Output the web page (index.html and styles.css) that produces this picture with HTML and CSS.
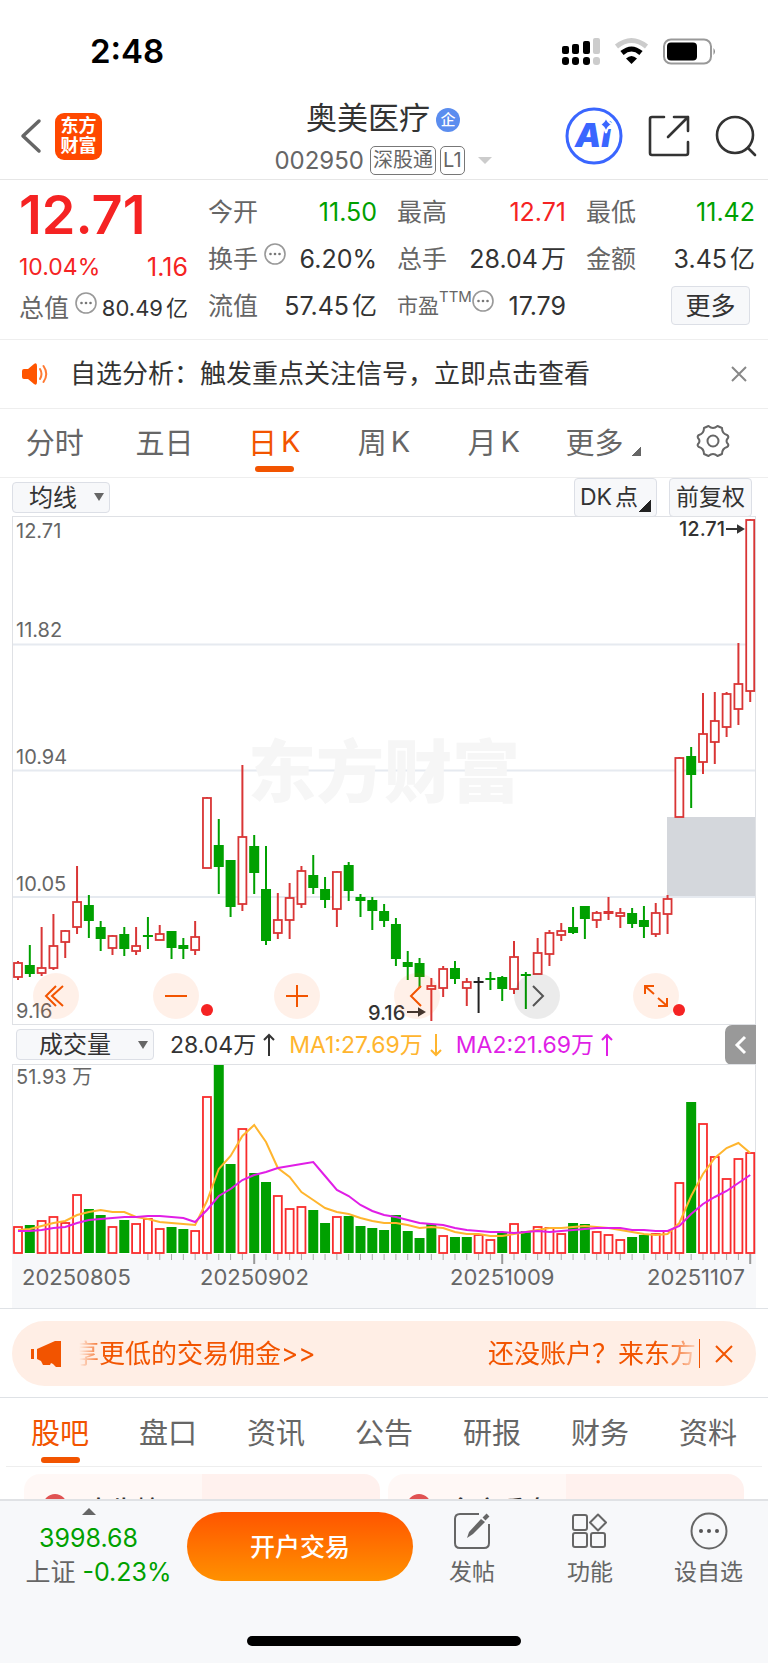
FILE: index.html
```html
<!DOCTYPE html>
<html lang="zh-CN">
<head>
<meta charset="utf-8">
<meta name="viewport" content="width=device-width, initial-scale=1">
<title>奥美医疗 002950</title>
<link rel="stylesheet" href="styles.css">
</head>
<body>
<div class="app">
  <div class="status">
    <span class="status-time">2:48</span>
    <svg class="status-icons" width="156" height="30" viewBox="0 0 156 30" aria-hidden="true">
      <g fill="#000">
        <rect x="0" y="10" width="7" height="8" rx="2"/><rect x="10" y="8" width="7" height="10" rx="2"/><rect x="21" y="5" width="7" height="13" rx="2"/>
        <rect x="0" y="21" width="7" height="8" rx="3"/><rect x="10" y="21" width="7" height="8" rx="3"/><rect x="21" y="21" width="7" height="8" rx="3"/>
      </g>
      <g fill="#ccc"><rect x="31" y="2" width="7" height="16" rx="2"/><rect x="31" y="21" width="7" height="8" rx="3"/></g>
      <path d="M54.500 10.500Q69.500-1.500 84.500 10.500" fill="none" stroke="#ccc" stroke-width="5"/>
      <path d="M60 17Q69.500 9 79 17" fill="none" stroke="#000" stroke-width="5"/>
      <path d="M64 22.500Q69.500 17.500 75 22.500L69.500 28Z"/>
      <rect x="102" y="3.500" width="47" height="24" rx="7" fill="none" stroke="#999" stroke-width="2"/>
      <rect x="105" y="6.500" width="30" height="18" rx="4"/>
      <path d="M151.500 12q3 3.500 0 7z" fill="#888"/>
    </svg>
  </div>

  <header class="header">
    <div class="header-left">
      <button class="icon-btn" aria-label="返回"><svg width="22" height="36" viewBox="0 0 22 36"><path d="M19 3L3 18L19 33" fill="none" stroke="#666" stroke-width="3.500" stroke-linecap="round" stroke-linejoin="round"/></svg></button>
      <a class="logo" href="#">东方<br>财富</a>
    </div>
    <div class="header-title">
      <h1 class="stock-name">奥美医疗<span class="badge">企</span></h1>
      <div class="stock-code"><span>002950</span><span class="tags"><span class="tag">深股通</span><span class="tag">L1</span></span><i class="tri-down"></i></div>
    </div>
    <div class="header-right">
      <button class="icon-btn" aria-label="Ai">
        <svg width="58" height="58" viewBox="0 0 58 58"><circle cx="29" cy="29" r="27" fill="none" stroke="#3a66ff" stroke-width="3"/><text x="10" y="40" class="ai-text">Ai</text><path d="M41 9Q42.500 16 48 17.500Q42.500 19 41 26Q39.500 19 34 17.500Q39.500 16 41 9Z" fill="#3a66ff" stroke="#fff" stroke-width="2"/></svg>
      </button>
      <button class="icon-btn" aria-label="分享">
        <svg width="42" height="42" viewBox="0 0 42 42" fill="none" stroke="#333" stroke-width="2.600" stroke-linecap="round" stroke-linejoin="round"><path d="M16 2H4Q2 2 2 4V38Q2 40 4 40H38Q40 40 40 38V27M26 2H40V16M40 2L20 22"/></svg>
      </button>
      <button class="icon-btn" aria-label="搜索">
        <svg width="42" height="42" viewBox="0 0 42 42" fill="none" stroke="#333" stroke-width="2.600" stroke-linecap="round"><circle cx="20" cy="20" r="18"/><path d="M33 33L40 40"/></svg>
      </button>
    </div>
  </header>

  <section class="quote">
    <div class="quote-col main">
      <strong class="price">12.71</strong>
      <div class="pair small up"><span>10.04%</span><span class="change">1.16</span></div>
      <div class="pair small"><span class="lbl">总值<svg class="dots"><use href="#more-dots"/></svg></span><span class="cap">80.49<span class="unit">亿</span></span></div>
    </div>
    <div class="quote-col">
      <div class="pair"><span class="lbl">今开</span><span class="down">11.50</span></div>
      <div class="pair"><span class="lbl">换手<svg class="dots"><use href="#more-dots"/></svg></span><span>6.20%</span></div>
      <div class="pair"><span class="lbl">流值</span><span>57.45<span class="unit">亿</span></span></div>
    </div>
    <div class="quote-col">
      <div class="pair"><span class="lbl">最高</span><span class="up">12.71</span></div>
      <div class="pair"><span class="lbl">总手</span><span>28.04<span class="unit">万</span></span></div>
      <div class="pair"><span class="lbl pe">市盈<sup>TTM</sup><svg class="dots"><use href="#more-dots"/></svg></span><span>17.79</span></div>
    </div>
    <div class="quote-col">
      <div class="pair"><span class="lbl">最低</span><span class="down">11.42</span></div>
      <div class="pair"><span class="lbl">金额</span><span>3.45<span class="unit">亿</span></span></div>
      <div class="pair end"><button class="chip more">更多</button></div>
    </div>
  </section>

  <section class="notice">
    <svg width="28" height="24" viewBox="0 0 28 24" aria-hidden="true"><path d="M0 9Q0 7 2 7H6L12 2Q15 0 15 4V20Q15 24 12 22L6 17H2Q0 17 0 15Z" fill="#ff5500"/><path d="M18 7Q21 12 18 17M21.500 4Q27 12 21.500 20" fill="none" stroke="#ff7a33" stroke-width="2" stroke-linecap="round"/></svg>
    <p>自选分析：触发重点关注信号，立即点击查看</p>
    <button class="icon-btn" aria-label="关闭"><svg width="18" height="18" viewBox="0 0 18 18"><path d="M2 2L16 16M16 2L2 16" stroke="#888" stroke-width="2"/></svg></button>
  </section>

  <nav class="tabs periods">
    <button>分时</button><button>五日</button><button class="active">日<span>K</span></button><button>周<span>K</span></button><button>月<span>K</span></button>
    <button>更多<i class="corner"></i></button>
    <button aria-label="设置"><svg width="34" height="34" viewBox="0 0 34 34" fill="none" stroke="#666" stroke-width="2" stroke-linejoin="round"><path d="M12.500 2Q17 6 21.500 2L26 4Q26 9.500 31 11Q33 12 32 14Q29 17 32 20Q33 22 31 23Q26 24.500 26 30L21.500 32Q17 28 12.500 32L8 30Q8 24.500 3 23Q1 22 2 20Q5 17 2 14Q1 12 3 11Q8 9.500 8 4Z"/><circle cx="17" cy="17" r="5.500"/></svg></button>
  </nav>

  <section class="toolbar">
    <label class="picker"><select aria-label="主图指标"><option>均线</option></select><i></i></label>
    <div class="toolbar-right">
      <button class="chip dk">DK<span class="unit">点</span><i class="corner dark"></i></button>
      <button class="chip adj">前复权</button>
    </div>
  </section>

  <section class="chart">
    <svg id="candles" viewBox="0 0 744 509" role="img" aria-label="日K线"></svg>
    <button class="ctl c1" aria-label="最早"><svg viewBox="0 0 46 46"><path d="M23 13L13 23L23 33M30 13L19 23L30 33"/></svg></button>
    <button class="ctl c2" aria-label="缩小"><svg viewBox="0 0 46 46"><path d="M12 23H34"/></svg></button>
    <button class="ctl c3" aria-label="放大"><svg viewBox="0 0 46 46"><path d="M12 23H34M23 12V34"/></svg></button>
    <button class="ctl c4" aria-label="左移"><svg viewBox="0 0 46 46"><path d="M27 13L17 23L27 33"/></svg></button>
    <button class="ctl c5" aria-label="右移"><svg viewBox="0 0 46 46"><path d="M19 13L29 23L19 33"/></svg></button>
    <button class="ctl c6" aria-label="全屏"><svg viewBox="0 0 46 46"><path d="M12 21V13H21M13 14L21 21M34 25V33H25M33 32L25 25"/></svg></button>
  </section>

  <section class="volbar">
    <label class="picker vol"><select aria-label="副图指标"><option>成交量</option></select><i></i></label>
    <div class="legend"><span>28.04万<svg viewBox="0 0 12 24"><path d="M6 23V2M1 7L6 2L11 7"/></svg></span><span class="ma1">MA1:27.69万<svg viewBox="0 0 12 24"><path d="M6 1V22M1 17L6 22L11 17"/></svg></span><span class="ma2">MA2:21.69万<svg viewBox="0 0 12 24"><path d="M6 23V2M1 7L6 2L11 7"/></svg></span></div>
    <button class="fold" aria-label="展开"><svg width="14" height="20" viewBox="0 0 14 20"><path d="M11 2L3 10L11 18" fill="none" stroke="#fff" stroke-width="3"/></svg></button>
  </section>

  <section class="chart"><svg id="volume" viewBox="0 0 744 244" role="img" aria-label="成交量"></svg></section>

  <section class="promo-wrap">
    <div class="promo">
      <svg width="32" height="28" viewBox="0 0 32 28" fill="#f25400" aria-hidden="true"><rect x="0" y="9" width="3" height="10"/><path d="M6 9L24 1H30V27H25L22 24L20 23L19 25H12L10 21L6 19Z"/></svg>
      <div class="marquee"><a href="#">享更低的交易佣金&gt;&gt;</a><a href="#">还没账户？来东方</a></div>
      <button class="icon-btn promo-x" aria-label="关闭广告"><svg width="18" height="18" viewBox="0 0 18 18"><path d="M1 1L17 17M17 1L1 17" stroke="#f25400" stroke-width="2"/></svg></button>
    </div>
  </section>

  <nav class="tabs sections">
    <button class="active">股吧</button><button>盘口</button><button>资讯</button><button>公告</button><button>研报</button><button>财务</button><button>资料</button>
  </nav>

  <section class="cards">
    <article class="card"><i class="dot"></i><h2>大牛榜</h2></article>
    <article class="card"><i class="dot"></i><h2>名家看盘</h2></article>
  </section>

  <footer class="bottom">
    <div class="bottom-row">
      <div class="index">
        <i class="tri-up"></i>
        <span class="index-val down">3998.68</span>
        <span class="index-chg">上证 <b>-0.23%</b></span>
      </div>
      <button class="trade">开户交易</button>
      <button class="action"><svg width="38" height="38" viewBox="0 0 38 38" fill="none" stroke="#666" stroke-width="2"><path d="M26 2H7Q2 2 2 7V31Q2 36 7 36H31Q36 36 36 31V12"/><path d="M14 26L16 20L28 7L32 10L20 22Z" fill="#666" stroke="none"/><path d="M31 7L35 3" stroke-width="4"/></svg>发帖</button>
      <button class="action"><svg width="38" height="38" viewBox="0 0 38 38" fill="none" stroke="#666" stroke-width="2"><rect x="2" y="3" width="14" height="15" rx="2"/><rect x="2" y="21" width="14" height="14" rx="2"/><rect x="20" y="21" width="14" height="14" rx="2"/><path d="M27 2.500L35 10.500L27 18.500L19 10.500Z" stroke-linejoin="round"/></svg>功能</button>
      <button class="action"><svg width="38" height="38" viewBox="0 0 38 38"><circle cx="19" cy="19" r="17.500" fill="none" stroke="#666" stroke-width="2"/><g fill="#555"><circle cx="11" cy="19" r="2"/><circle cx="19" cy="19" r="2"/><circle cx="27" cy="19" r="2"/></g></svg>设自选</button>
    </div>
    <div class="home"></div>
  </footer>
</div>
<svg class="defs" aria-hidden="true"><symbol id="more-dots" viewBox="0 0 22 22"><circle cx="11" cy="11" r="10" fill="none" stroke="#999" stroke-width="1.600"/><g fill="#777"><circle cx="6.500" cy="11" r="1.300"/><circle cx="11" cy="11" r="1.300"/><circle cx="15.500" cy="11" r="1.300"/></g></symbol></svg>
<script src="chart.js"></script>
</body>
</html>
```
FILE: styles.css
```css
* { box-sizing: border-box; margin: 0; padding: 0; }
body { font-family: Inter, "Noto Sans CJK SC", sans-serif; color: #333; background: #fff; }
button, select { font: inherit; color: inherit; background: none; border: 0; }
a { color: inherit; text-decoration: none; }
svg { display: block; flex: none; }
.defs { position: absolute; width: 0; height: 0; }
.app { min-height: 100vh; display: flex; flex-direction: column; }
.up { color: #f52323; }
.down { color: #00a000; }
.unit { margin-left: 3px; }

.status { height: 100px; padding: 2px 50px 0 90px; display: flex; justify-content: space-between; align-items: center; }
.status-time { font-size: 33px; font-weight: 600; color: #000; }

.header { display: grid; grid-template-columns: 1fr auto 1fr; height: 80px; border-bottom: 1px solid #e6e6e6; }
.header-left, .header-right { display: flex; align-items: center; padding-bottom: 8px; }
.header-left { padding-left: 20px; gap: 13px; }
.header-right { justify-content: flex-end; gap: 25px; padding-right: 11px; }
.icon-btn { display: flex; align-items: center; }
.logo { width: 47px; height: 47px; border-radius: 9px; background: #ff4800; color: #fff; font-size: 18px; line-height: 20px; font-weight: 700; text-align: center; padding-top: 3px; }
.header-title { padding-right: 2px; }
.stock-name { display: flex; align-items: center; justify-content: center; gap: 6px; height: 40px; font-size: 31px; line-height: 36px; font-weight: 400; padding-bottom: 4px; }
.badge { width: 24px; height: 24px; border-radius: 50%; background: #5b8def; color: #fff; font-size: 15px; line-height: 23px; font-weight: 500; text-align: center; margin-top: 4px; }
.stock-code { display: flex; align-items: center; gap: 6px; height: 40px; font-size: 24px; color: #666; }
.tags { display: flex; gap: 4px; }
.tag { border: 1px solid #777; border-radius: 5px; height: 29px; padding: 0 2px; font-size: 20px; line-height: 27px; }
.tri-down { margin-left: 7px; border: 7px solid transparent; border-top: 7px solid #ccc; border-bottom: 0; }
.ai-text { font-size: 33px; font-weight: 900; font-style: italic; fill: #3a66ff; }

.quote { display: grid; grid-template-columns: repeat(4, 1fr); gap: 20px; padding: 8px 13px 9px 19px; height: 160px; border-bottom: 1px solid #eee; }
.quote-col { display: flex; flex-direction: column; min-width: 0; }
.pair { display: flex; justify-content: space-between; align-items: center; height: 47px; font-size: 25px; line-height: 36px; white-space: nowrap; }
.pair.small { font-size: 23px; height: 41px; }
.pair.end { justify-content: flex-end; padding-right: 5px; }
.change { font-size: 25px; }
.price { font-size: 54px; line-height: 54px; height: 58px; font-weight: 600; color: #f52323; }
.lbl { display: flex; align-items: center; gap: 6px; font-size: 25px; color: #666; }
.cap { font-size: 22px; }
.pe { font-size: 21px; gap: 0; }
.pe sup { font-size: 15px; line-height: 36px; align-self: flex-start; height: 36px; padding-bottom: 18px; display: flex; align-items: center; }
.dots { width: 22px; height: 22px; margin-bottom: 10px; }
.chip { border: 1px solid #dcdfe6; border-radius: 4px; background: #f7f8fa; white-space: nowrap; }
.more { width: 79px; height: 39px; line-height: 34px; font-size: 25px; }

.notice { display: flex; align-items: center; height: 69px; padding: 0 20px 0 22px; border-bottom: 1px solid #eee; }
.notice p { flex: 1; margin-left: 20px; font-size: 26px; line-height: 36px; white-space: nowrap; }

.tabs { display: grid; grid-template-columns: repeat(7, 1fr); height: 69px; border-bottom: 1px solid #eee; }
.tabs button { position: relative; display: flex; align-items: center; justify-content: center; gap: 4px; padding-bottom: 4px; font-size: 29px; color: #666; }
.tabs .active { color: #f25400; }
.tabs .active::after { content: ""; position: absolute; bottom: 5px; width: 39px; height: 6px; border-radius: 3px; background: #f25400; }
.corner { width: 9px; height: 9px; margin: 20px 0 0 5px; background: linear-gradient(135deg, transparent 50%, #666 50%); }
.corner.dark { width: 12px; height: 12px; margin: 18px 0 0 1px; background: linear-gradient(135deg, transparent 50%, #222 50%); }

.toolbar { display: flex; justify-content: space-between; align-items: center; height: 38px; padding: 0 16px 0 12px; }
.toolbar-right { display: flex; gap: 12px; }
.toolbar .chip { height: 39px; font-size: 23px; line-height: 36px; display: flex; align-items: center; justify-content: center; }
.dk, .adj { width: 83px; }
.picker { position: relative; display: flex; align-items: center; width: 98px; height: 31px; border: 1px solid #dcdfe6; border-radius: 4px; background: #f7f8fa; font-size: 24px; }
.picker select { appearance: none; width: 100%; height: 31px; padding-left: 16px; line-height: 29px; }
.picker i { position: absolute; right: 5px; border: 5px solid transparent; border-top: 8px solid #666; border-bottom: 0; pointer-events: none; }
.picker.vol { width: 138px; }
.picker.vol select { padding-left: 22px; }

.chart { position: relative; margin: 0 12px; }
.chart > svg { width: 100%; height: auto; }
.chart text { font-size: 20px; fill: #666; }
.chart .watermark { font-size: 68px; font-weight: 900; fill: #f6f6f6; }
.chart .mark { font-size: 20px; font-weight: 500; fill: #333; }
.chart .date { font-size: 22px; }
.ctl { position: absolute; bottom: 6px; width: 46px; height: 46px; margin-left: -23px; border-radius: 50%; background: rgba(255, 90, 0, .09); }
.ctl svg { width: 46px; height: 46px; fill: none; stroke: #f25400; stroke-width: 2; }
.c1 { left: 5.9%; } .c2 { left: 22.1%; } .c3 { left: 38.3%; } .c4 { left: 54.4%; } .c5 { left: 70.5%; } .c6 { left: 86.6%; }
.c5 { background: rgba(0, 0, 0, .08); }
.c5 svg { stroke: #555; }

.volbar { display: flex; align-items: center; height: 39px; padding-left: 16px; margin-right: 12px; }
.legend { flex: 1; display: flex; gap: 14px; margin-left: 16px; font-size: 23px; line-height: 34px; white-space: nowrap; }
.legend span { display: flex; align-items: center; gap: 7px; }
.legend svg { width: 12px; height: 24px; fill: none; stroke: currentColor; stroke-width: 2; }
.ma1 { color: #ffb52e; }
.ma2 { color: #e01ee6; }
.fold { width: 31px; height: 40px; border-radius: 7px 0 0 7px; background: #999; display: flex; align-items: center; justify-content: center; }

.promo-wrap { padding: 12px 12px 11px; border-top: 1px solid #dfe2e6; border-bottom: 1px solid #dfe2e6; }
.promo { display: flex; align-items: center; height: 65px; border-radius: 33px; background: #ffeee5; color: #f25400; padding: 0 23px 0 19px; }
.marquee { flex: 1; min-width: 0; display: flex; justify-content: space-between; margin: 0 3px 0 10px; font-size: 26px; line-height: 36px; white-space: nowrap; overflow: hidden; mask-image: linear-gradient(90deg, transparent 1%, #000 5%, #000 95%, transparent 101%); }
.promo-x { border-left: 1px solid #f25400; height: 29px; padding-left: 15px; }

.sections { margin: 0 6px; }
.sections button { padding-bottom: 2px; }
.sections .active::after { bottom: 3px; }

.cards { flex: 1 0 32px; height: 32px; overflow: hidden; display: grid; grid-template-columns: 1fr 1fr; gap: 8px; padding: 7px 24px 0; }
.card { display: flex; gap: 19px; height: 100px; border-radius: 16px; padding: 20px 19px; background: linear-gradient(90deg, #fff8f6 50%, #fff1ee 50%); }
.card h2 { font-size: 25px; line-height: 32px; font-weight: 500; }
.dot { width: 24px; height: 24px; border-radius: 50%; background: #e05252; }

.bottom { border-top: 2px solid #e0e2e5; background: #f7f8fa; height: 165px; display: flex; flex-direction: column; justify-content: space-between; align-items: center; padding-bottom: 18px; }
.bottom-row { width: 100%; display: grid; grid-template-columns: 187fr 226fr 118fr 118fr 119fr; padding-top: 7px; }
.index { display: flex; flex-direction: column; align-items: center; font-size: 25px; line-height: 34px; padding-left: 10px; white-space: nowrap; }
.tri-up { border: 7px solid transparent; border-bottom: 7px solid #666; border-top: 0; margin: 0 20px 6px 0; }
.index-val { margin-right: 20px; }
.index-chg { color: #666; }
.index-chg b { font-weight: 400; color: #00a000; }
.trade { height: 69px; margin-top: 4px; padding-bottom: 4px; border-radius: 35px; background: linear-gradient(#ff5500, #ff9100); color: #fff; font-size: 25px; font-weight: 500; }
.action { display: flex; flex-direction: column; align-items: center; gap: 5px; padding-top: 4px; font-size: 23px; line-height: 34px; color: #666; white-space: nowrap; }
.home { width: 274px; height: 10px; border-radius: 5px; background: #000; }
```
FILE: chart.js
```js
// Each day: colour, high, body top, body bottom, low (plot units from the top edge).
const days = [
  ['r',445,446,461,464],['g',429,449,458,461],['r',411,451,457,460],['r',398,429,452,454],['r',414,414,426,442],
  ['r',350,385,411,418],['g',379,389,405,422],['g',405,411,423,435],['r',419,419,432,439],['g',411,418,433,440],
  ['r',411,429,435,439],['g',401,419,421,433],['r',409,417,424,424],['g',415,415,432,443],['g',422,429,433,443],
  ['r',405,420,434,439],['r',281,281,352,352],['g',303,329,351,378],['g',344,344,391,401],['r',249,320,388,395],
  ['g',319,330,357,378],['g',330,373,425,429],['r',377,403,417,423],['r',367,381,404,423],['r',350,354,388,392],
  ['g',339,359,372,378],['g',361,373,384,392],['r',355,355,393,411],['g',346,349,375,385],['g',378,381,385,401],
  ['g',381,384,395,414],['g',388,395,405,411],['g',402,408,443,450],['g',435,446,451,464],['g',442,447,461,472],
  ['r',462,469,473,505],['r',450,452,472,481],['g',445,452,463,468],['r',462,465,472,490],['k',461,465,466,497],
  ['g',456,462,464,474],['g',460,461,473,485],['r',425,440,473,478],['g',456,458,459,493],['r',422,436,458,458],
  ['r',414,416,438,450],['r',407,414,419,425],['g',391,411,417,418],['g',390,390,403,423],['r',395,396,404,412],
  ['r',381,395,398,404],['r',392,396,400,412],['g',392,397,408,412],['g',390,404,411,422],['r',387,396,418,421],
  ['r',379,382,398,418],['r',241,241,301,301],['g',231,240,259,292],['r',177,217,246,258],['r',176,204,226,248],
  ['r',176,177,211,221],['r',127,167,193,209],['r',3,3,175,186]
];
const vols = [28,29,34,38,32,60,45,39,28,34,31,36,26,27,25,24,158,189,90,126,81,72,59,46,48,44,31,38,38,28,26,24,39,23,16,30,19,17,17,20,15,21,31,23,28,27,21,31,30,23,20,15,17,19,21,24,72,152,131,98,76,96,102];
const ma1 = [24,25,28,31,33,39,42,44,42,42,37,35,32,31,30,29,53,85,98,118,129,112,86,77,62,54,46,42,40,36,33,31,31,29,26,27,26,22,20,20,18,18,20,22,24,26,26,27,28,27,26,24,22,20,19,20,31,58,80,96,106,111,101];
const ma2 = [23,23,24,26,27,31,34,35,36,37,37,38,38,37,36,32,44,58,65,74,79,82,86,88,90,92,78,64,58,49,43,39,37,34,31,30,29,26,24,23,22,22,21,22,23,22,23,24,25,26,26,26,24,24,23,23,28,40,50,57,63,71,79];
// Volume bars whose colour differs from that day's candle.
const flipped = new Set([11, 35, 38, 39, 40]);
const x = i => 6 + i * 11.81;
const line = (x1, y1, x2, y2, c, w) => `<path d="M${x1} ${y1}L${x2} ${y2}" stroke="${c}" stroke-width="${w}"/>`;
const text = (x, y, s, c = '') => `<text x="${x}" y="${y}" class="${c}">${s}</text>`;
const box = (cx, top, bottom, c, hollow) => hollow
  ? `<rect x="${cx - 4}" y="${top + 1}" width="8" height="${Math.max(bottom - top - 1, 1)}" fill="#fff" stroke="${c}" stroke-width="1.800"/>`
  : `<rect x="${cx - 5}" y="${top}" width="10" height="${Math.max(bottom - top, 2)}" fill="${c}"/>`;

let k = '';
for (const y of [128.5, 254.5, 381]) k += line(0, y, 744, y, '#e6eaf0', 2);
k += text(236, 281, '东方财富', 'watermark');
k += '<rect x="655" y="301" width="89" height="79" fill="#d4d7dc"/>';
k += '<rect x=".5" y=".5" width="743" height="508" fill="none" stroke="#dfe1e5"/>';
const colors = { r: '#d93535', g: '#00a000', k: '#222' };
days.forEach(([c, hi, top, bot, lo], i) => {
  const cx = x(i), col = colors[c];
  k += line(cx, hi, cx, lo, col, 2) + box(cx, top, bot, col, c === 'r' && bot - top > 3);
});
[['12.71', 22], ['11.82', 121], ['10.94', 248], ['10.05', 375], ['9.16', 502]].forEach(([s, y]) => { k += text(4, y, s); });
const arrow = (x1, y) => `<path d="M${x1} ${y}h12v-3l5 3l-5 3v-3" fill="#333" stroke="#333" stroke-width="2"/>`;
k += text(667, 20, '12.71', 'mark') + arrow(714, 13) + text(356, 504, '9.16', 'mark') + arrow(395, 496);
k += '<circle cx="195" cy="494" r="6" fill="#f52323"/><circle cx="667" cy="494" r="6" fill="#f52323"/>';
document.getElementById('candles').innerHTML = k;

const base = 190;
let v = `<rect x="0" y="${base}" width="744" height="54" fill="#f7f8fa"/>`;
v += `<path d="M0 .5H744M.5 0V${base}M743.500 0V${base}" stroke="#dfe1e5" fill="none"/>`;
vols.forEach((h, i) => {
  const red = (days[i][0] === 'r') !== flipped.has(i);
  v += box(x(i), base - h, base - 1, red ? '#f92c2c' : '#00a000', red);
  if (i > 10) v += i % 21 === 20 ? line(x(i), base, x(i), base + 10, '#999', 2) : line(x(i), base, x(i), base + 6, '#aaa', 1);
});
const poly = (a, c) => `<polyline points="${a.map((h, i) => x(i) + ',' + (base - h)).join(' ')}" fill="none" stroke="${c}" stroke-width="2"/>`;
v += poly(ma1, '#ffb52e') + poly(ma2, '#e01ee6') + text(4, 20, '51.93 万');
[['20250805', 10], ['20250902', 188], ['20251009', 438], ['20251107', 635]].forEach(([s, dx]) => { v += text(dx, 221, s, 'date'); });
document.getElementById('volume').innerHTML = v;
```
